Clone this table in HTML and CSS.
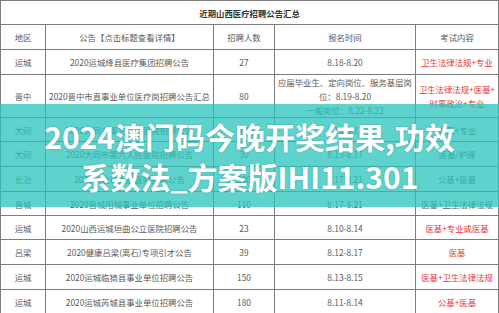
FILE: index.html
```html
<!DOCTYPE html>
<html lang="zh-CN">
<head>
<meta charset="utf-8">
<link rel="stylesheet" href="styles.css">
</head>
<body>
<div class="page">
  <table class="grid">
    <colgroup>
      <col class="c1"><col class="c2"><col class="c3"><col class="c4"><col class="c5">
    </colgroup>
    <tr class="r-title"><td colspan="5" class="title">近期山西医疗招聘公告汇总</td></tr>
    <tr class="r-head"><td>地区</td><td>公告【点击标题查看详情】</td><td>招聘人数</td><td>报名时间</td><td>考试内容</td></tr>
    <tr class="r-25"><td>运城</td><td>2020运城绛县医疗集团招聘公告</td><td>27</td><td>8.18-8.20</td><td class="red">卫生法律法规+专业</td></tr>
    <tr class="r-big"><td>晋中</td><td>2020晋中市直事业单位医疗岗招聘公告汇总</td><td>80</td><td class="multi">应届毕业生、定向岗位、服务基层岗<br>位：8.19-8.20<br>一般岗位：8.22-8.23</td><td class="red multi">卫生法律法规+医基+<br>时事政治+专业</td></tr>
    <tr class="r-24"><td>大同</td><td>2020大同市第三人民医院招聘公告</td><td>40</td><td>8.13-8.17</td><td>公基+专业</td></tr>
    <tr class="r-25"><td>大同</td><td>2020大同市第六人民医院招聘公告</td><td>30</td><td>8.13-8.17</td><td>医基/护理</td></tr>
    <tr class="r-25"><td>长治</td><td>2020长治市人民医院招聘公告</td><td>300</td><td>8.17-8.21</td><td>公基+医基</td></tr>
    <tr class="r-24"><td>晋城</td><td>2020晋城阳城事业单位招聘公告</td><td>110</td><td>8.17-8.21</td><td>医基+卫生法律法规</td></tr>
    <tr class="r-24"><td>运城</td><td>2020山西运城垣曲公立医院招聘公告</td><td>23</td><td>8.10-8.14</td><td class="red">医基+专业或医基</td></tr>
    <tr class="r-25"><td>吕梁</td><td>2020健康吕梁(离石)专项引才公告</td><td>39</td><td>8.12-8.17</td><td class="red">医基</td></tr>
    <tr class="r-25"><td>运城</td><td>2020运城临猗县事业单位招聘公告</td><td>150</td><td>8.13-8.15</td><td class="red">医基+卫生法律法规</td></tr>
    <tr class="r-25"><td>运城</td><td>2020运城芮城县事业单位招聘公告</td><td>180</td><td>8.11-8.14</td><td class="red">公基+医基</td></tr>
  </table>
  <div class="band">
    <p class="headline">2024澳门码今晚开奖结果,功效<br>系数法_方案版IHI11.301</p>
  </div>
</div>
</body>
</html>
```
FILE: styles.css
```css
html, body {
  margin: 0;
  padding: 0;
  background: #ffffff;
}
.page {
  position: relative;
  width: 499px;
  height: 313px;
  overflow: hidden;
}
.grid {
  border-collapse: collapse;
  table-layout: fixed;
  width: 498px;
  font-family: "Noto Sans CJK SC", "Liberation Sans", sans-serif;
  font-size: 8.4px;
  color: #5a5a5a;
}
.c1 { width: 45px; }
.c2 { width: 168px; }
.c3 { width: 61px; }
.c4 { width: 141px; }
.c5 { width: 83px; }
.grid td {
  border: 1px solid #7d7d7d;
  text-align: center;
  vertical-align: middle;
  padding: 0 1px;
  line-height: 12px;
  white-space: nowrap;
  overflow: hidden;
}
.grid td.multi {
  line-height: 14px;
}
.grid td.title {
  font-weight: 700;
  color: #333333;
}
.r-title { height: 24px; }
.r-head { height: 25px; }
.r-24 { height: 24px; }
.r-25 { height: 25px; }
.r-big { height: 42px; }
.red { color: #e8353b; }
.band {
  position: absolute;
  left: 0;
  top: 104px;
  width: 499px;
  height: 103px;
  background: rgba(40, 196, 188, 0.75);
  display: flex;
  align-items: center;
  justify-content: center;
}
.headline {
  margin: 0;
  text-align: center;
  font-family: "Noto Sans CJK SC", "Noto Sans", sans-serif;
  font-weight: 700;
  font-size: 30px;
  line-height: 40px;
  color: #ffffff;
  text-shadow: 0 0 2px rgba(0, 0, 0, 0.25);
}
```
